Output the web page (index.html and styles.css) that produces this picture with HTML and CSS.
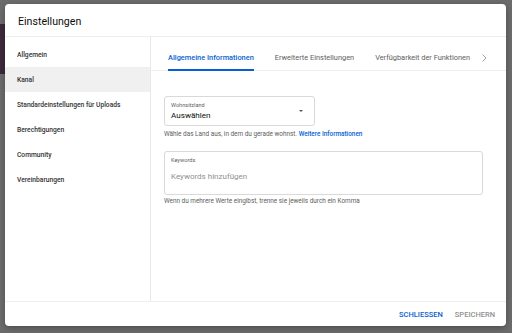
FILE: index.html
```html
<!DOCTYPE html>
<html lang="de">
<head>
    <meta charset="UTF-8" />
    <meta name="viewport" content="width=device-width, initial-scale=1.0" />
    <title>Einstellungen</title>
    <link rel="stylesheet" href="styles.css">
</head>
<body>
    <div class="backdrop">
        <div class="behind-thumb"></div>

        <div class="dialog">
            <div class="dialog-header">Einstellungen</div>

            <div class="dialog-body">
                <ul class="side-nav">
                    <li>Allgemein</li>
                    <li class="active">Kanal</li>
                    <li>Standardeinstellungen für Uploads</li>
                    <li>Berechtigungen</li>
                    <li>Community</li>
                    <li>Vereinbarungen</li>
                </ul>

                <div class="content">
                    <div class="tabs">
                        <span class="tab selected">Allgemeine Informationen</span>
                        <span class="tab">Erweiterte Einstellungen</span>
                        <span class="tab">Verfügbarkeit der Funktionen</span>
                        <svg class="tab-next" width="8" height="10" viewBox="0 0 8 10">
                            <path d="M2.5 1.5 L6 5 L2.5 8.5" fill="none" stroke="#8a8a8a" stroke-width="0.8"/>
                        </svg>
                    </div>

                    <div class="form">
                        <div class="field select-field">
                            <div class="field-text">
                                <span class="field-label">Wohnsitzland</span>
                                <span class="field-value">Auswählen</span>
                            </div>
                            <span class="caret"></span>
                        </div>
                        <p class="helper">Wähle das Land aus, in dem du gerade wohnst. <a href="#">Weitere Informationen</a></p>

                        <div class="field keywords-field">
                            <span class="field-label">Keywords</span>
                            <span class="field-placeholder">Keywords hinzufügen</span>
                        </div>
                        <p class="helper tight">Wenn du mehrere Werte eingibst, trenne sie jeweils durch ein Komma</p>
                    </div>
                </div>
            </div>

            <div class="dialog-footer">
                <button class="text-btn primary">Schliessen</button>
                <button class="text-btn disabled">Speichern</button>
            </div>
        </div>
    </div>
</body>
</html>
```

FILE: styles.css
```css
* {
    box-sizing: border-box;
}
body {
    margin: 0;
    font-family: Roboto, "Noto Sans", Arial, sans-serif;
    color: #0d0d0d;
}
.backdrop {
    width: 512px;
    height: 333px;
    background-color: #6c6c6c;
    padding: 4px 6px 7px 5px;
    position: relative;
    overflow: hidden;
}
.behind-thumb {
    position: absolute;
    left: 0;
    top: 24px;
    width: 5px;
    height: 50px;
    background-color: #3d2a3c;
}
.dialog {
    position: relative;
    height: 100%;
    background-color: white;
    border-radius: 4px;
    display: flex;
    flex-direction: column;
    box-shadow: 0 2px 6px rgba(0,0,0,0.3);
}
.dialog-header {
    height: 33px;
    padding: 3px 13px 0;
    display: flex;
    align-items: center;
    font-size: 10.6px;
    border-bottom: 1px solid #eeeeee;
}
.dialog-body {
    flex: 1;
    display: flex;
    min-height: 0;
}
.side-nav {
    list-style: none;
    margin: 0;
    padding: 5px 0 0;
    width: 146px;
    border-right: 1px solid #e8e8e8;
}
.side-nav li {
    height: 25px;
    display: flex;
    align-items: center;
    padding-left: 12px;
    font-size: 6.7px;
    font-weight: 500;
    color: #333333;
}
.side-nav li.active {
    background-color: #f0f0f0;
}
.content {
    flex: 1;
}
.tabs {
    height: 34px;
    display: flex;
    align-items: center;
    padding-left: 17px;
    gap: 21px;
    border-bottom: 1px solid #eeeeee;
}
.tab {
    height: 34px;
    display: flex;
    align-items: center;
    padding-top: 9px;
    font-size: 7.4px;
    color: #606060;
    border-bottom: 2px solid transparent;
}
.tab.selected {
    color: #065fd4;
    font-weight: 500;
    border-bottom-color: #065fd4;
}
.tab-next {
    margin-left: -11px;
    margin-top: 9px;
}
.form {
    padding: 25px 0 0 13px;
}
.field {
    border: 1px solid #d9d9d9;
    border-radius: 3px;
}
.select-field {
    width: 151px;
    height: 30px;
    display: flex;
    align-items: center;
    justify-content: space-between;
    padding: 0 11px 0 6px;
}
.field-text {
    display: flex;
    flex-direction: column;
}
.field-label {
    font-size: 5.6px;
    color: #606060;
}
.field-value {
    font-size: 8.1px;
    color: #0d0d0d;
    margin-top: 2px;
}
.caret {
    width: 0;
    height: 0;
    border-left: 2.5px solid transparent;
    border-right: 2.5px solid transparent;
    border-top: 2.5px solid #555555;
}
.helper {
    margin: 4px 0 0;
    font-size: 6.4px;
    color: #606060;
}
.helper.tight {
    margin-top: 2px;
}
.helper a {
    color: #065fd4;
    text-decoration: none;
    font-weight: 500;
}
.keywords-field {
    margin-top: 13px;
    width: 319px;
    height: 44px;
    display: flex;
    flex-direction: column;
    padding: 5px 6px 0;
}
.keywords-field .field-placeholder {
    margin-top: 9px;
    font-size: 8px;
    color: #909090;
}
.dialog-footer {
    height: 25px;
    border-top: 1px solid #eeeeee;
    display: flex;
    justify-content: flex-end;
    align-items: center;
    padding-right: 7px;
    gap: 4px;
}
.text-btn {
    background: none;
    border: none;
    padding: 2px 4px;
    font-family: inherit;
    font-size: 7.5px;
    font-weight: 500;
    text-transform: uppercase;
    cursor: pointer;
}
.text-btn.primary {
    color: #065fd4;
}
.text-btn.disabled {
    color: #909090;
}
```
